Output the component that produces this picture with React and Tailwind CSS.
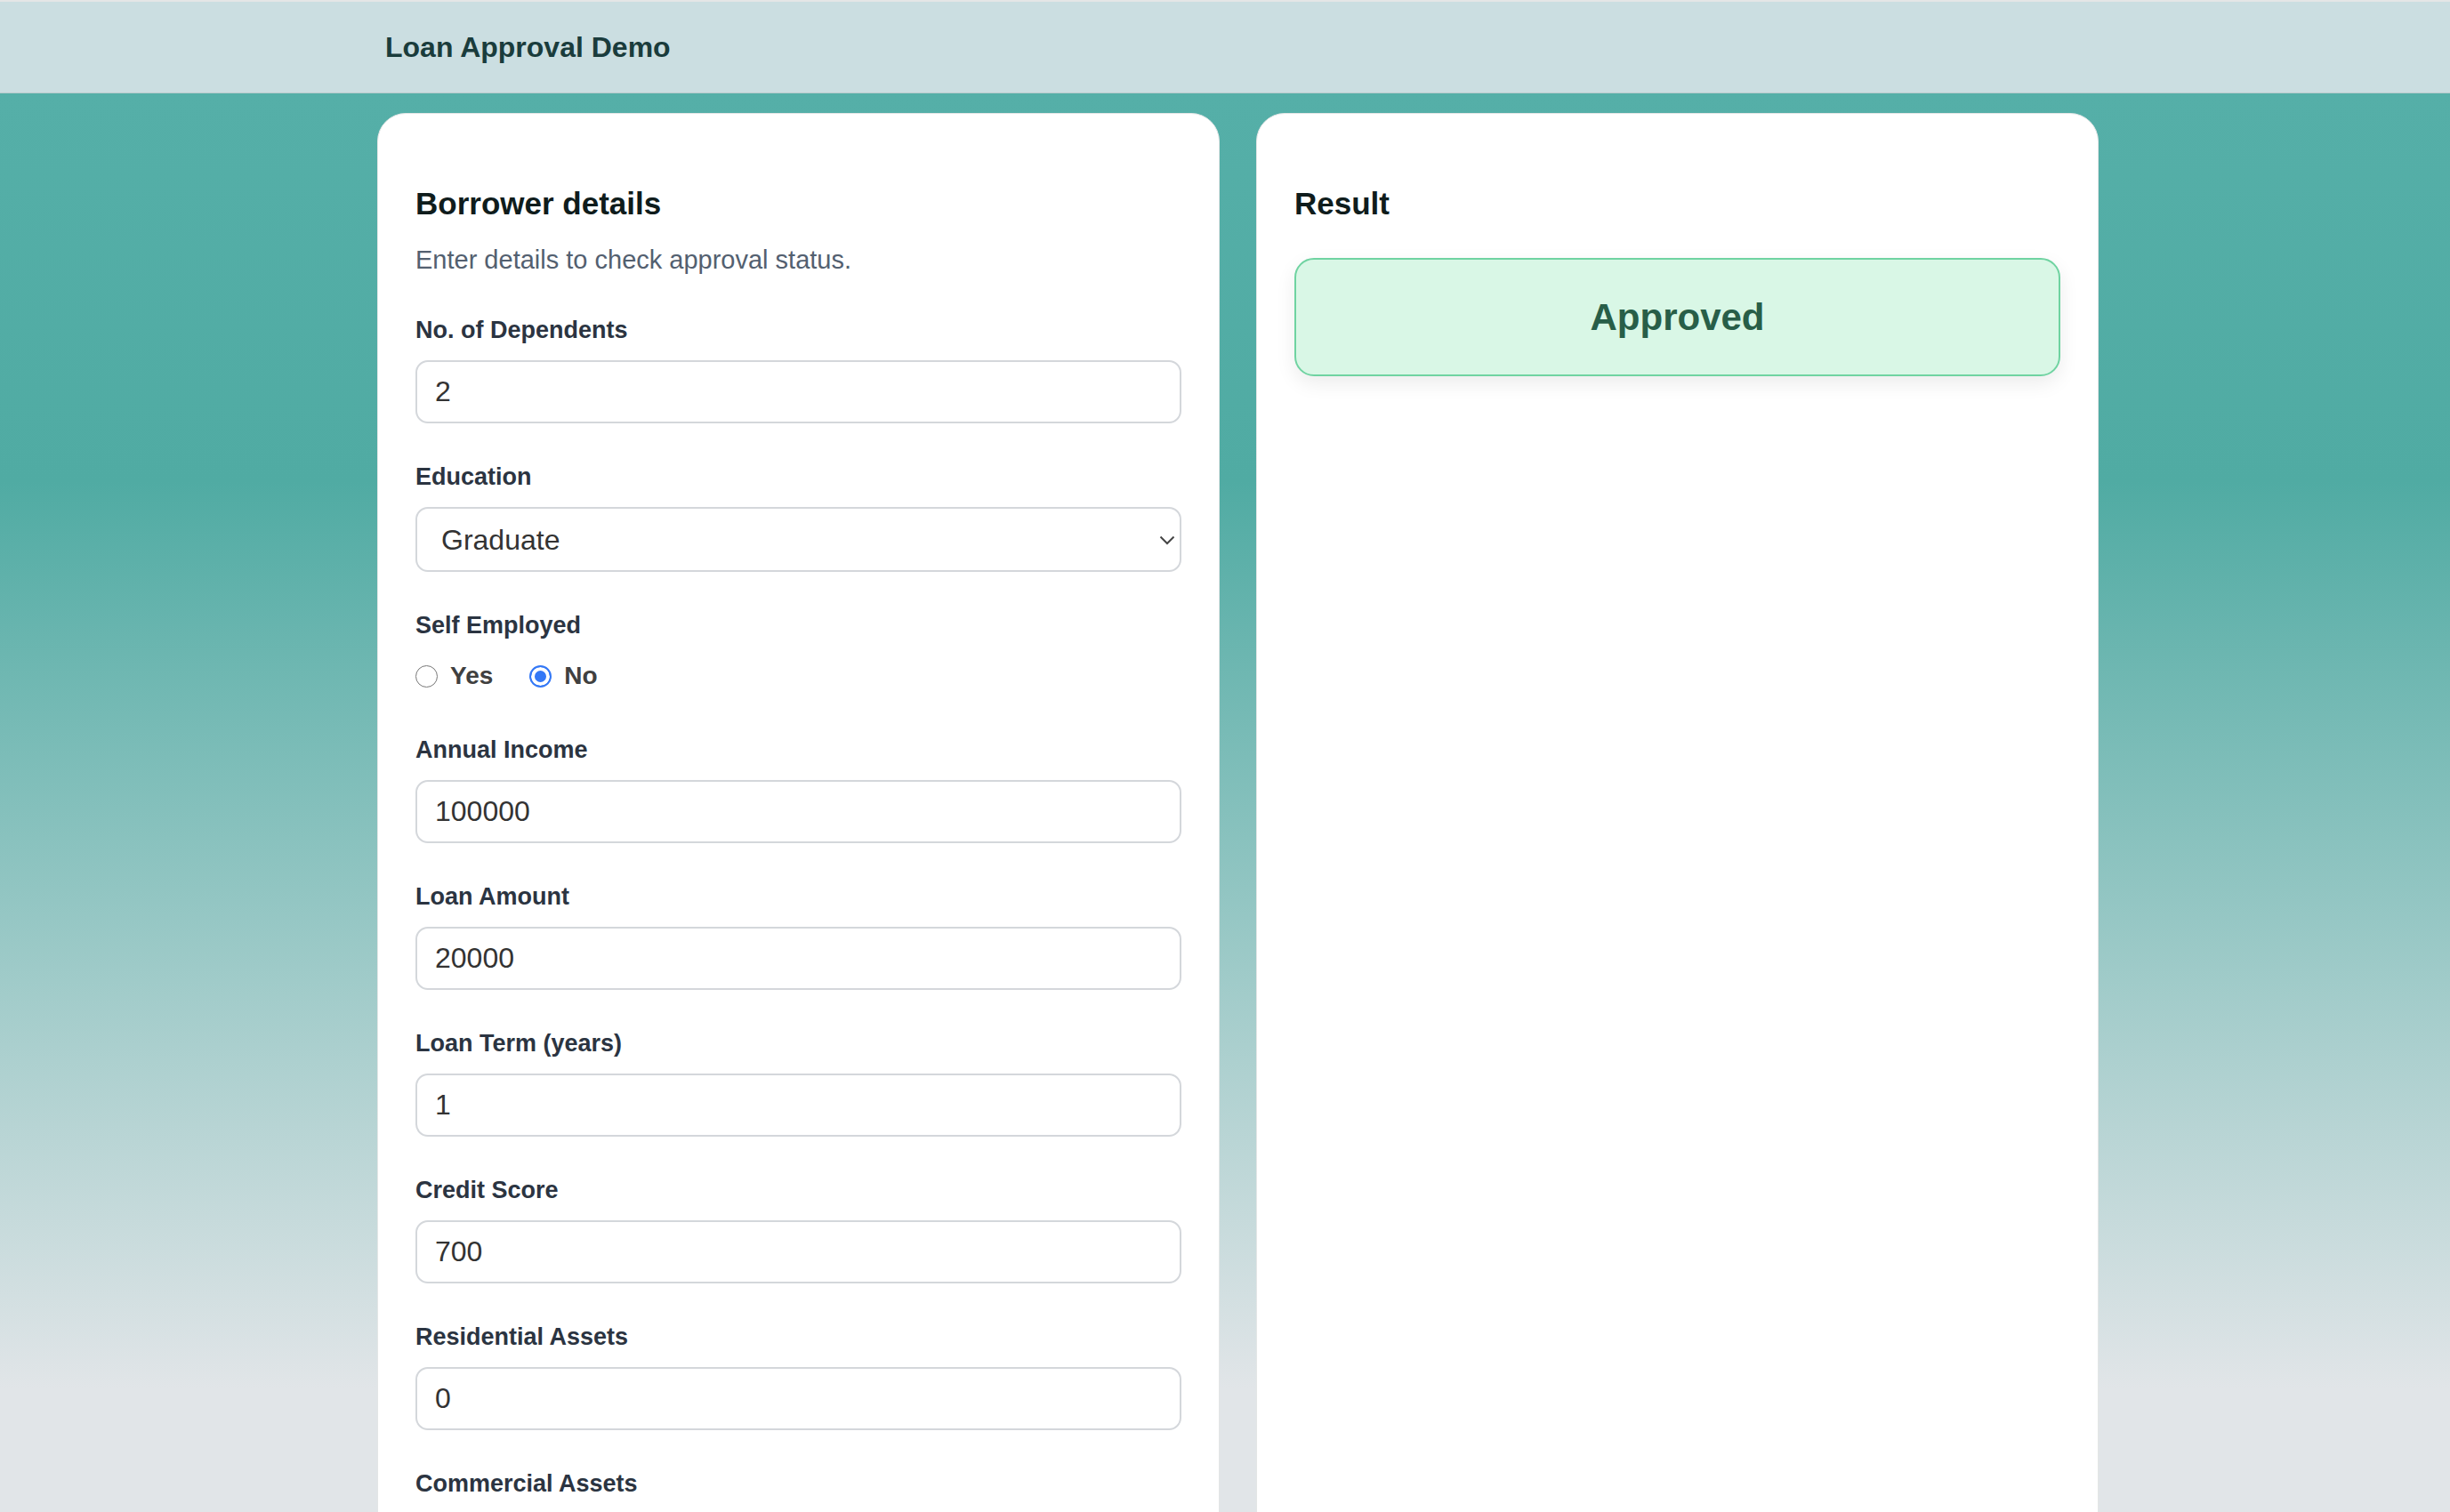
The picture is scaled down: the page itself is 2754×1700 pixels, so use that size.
import { useState } from 'react';

const fields = [
  { id: 'dependents', label: 'No. of Dependents', value: '2' },
  { id: 'education', label: 'Education', type: 'select' },
  { id: 'self', label: 'Self Employed', type: 'radio' },
  { id: 'income', label: 'Annual Income', value: '100000' },
  { id: 'amount', label: 'Loan Amount', value: '20000' },
  { id: 'term', label: 'Loan Term (years)', value: '1' },
  { id: 'cibil', label: 'Credit Score', value: '700' },
  { id: 'res', label: 'Residential Assets', value: '0' },
  { id: 'com', label: 'Commercial Assets', value: '0' },
  { id: 'lux', label: 'Luxury Assets', value: '0' },
  { id: 'bank', label: 'Bank Assets', value: '0' },
];

function Field({ f, selfEmployed, setSelfEmployed }) {
  const label = (
    <label className="block text-[27px] leading-[32px] font-bold text-[#2b3441]">{f.label}</label>
  );

  if (f.type === 'select') {
    return (
      <div>
        {label}
        <div className="relative mt-[18px]">
          <select
            defaultValue="Graduate"
            className="appearance-none w-full h-[73px] rounded-[14px] border-2 border-[#d4d7db] bg-white pl-[27px] pr-10 text-[32px] text-[#333] outline-none"
          >
            <option>Graduate</option>
            <option>Not Graduate</option>
          </select>
          <svg className="absolute right-[7px] top-[32px] pointer-events-none" width="18" height="11" viewBox="0 0 18 11" fill="none">
            <path d="M1.5 1.5L9 9L16.5 1.5" stroke="#454545" strokeWidth="2" />
          </svg>
        </div>
      </div>
    );
  }

  if (f.type === 'radio') {
    return (
      <div>
        {label}
        <div className="mt-[18px] h-[46px] flex items-center gap-[41px] text-[28px] font-bold text-[#404040]">
          {['Yes', 'No'].map(opt => (
            <label key={opt} className="flex items-center gap-[14px]">
              <input
                type="radio"
                name="self"
                checked={selfEmployed === opt}
                onChange={() => setSelfEmployed(opt)}
                className="appearance-none w-[25px] h-[25px] rounded-full border-[1.5px] border-[#777] bg-white checked:border-2 checked:border-[#3478f6] checked:bg-[#3478f6] checked:shadow-[inset_0_0_0_4px_white]"
              />
              {opt}
            </label>
          ))}
        </div>
      </div>
    );
  }

  return (
    <div>
      {label}
      <input
        type="text"
        defaultValue={f.value}
        className="mt-[18px] block w-full h-[71px] rounded-[14px] border-2 border-[#d4d7db] bg-white px-[20px] text-[32px] text-[#333] outline-none"
      />
    </div>
  );
}

export default function App() {
  const [selfEmployed, setSelfEmployed] = useState('No');

  return (
    <div className="min-h-screen font-['Liberation_Sans',Arial,sans-serif]">
      <header className="h-[105px] border-t-2 border-[#e4e6e6] bg-[#cbdee1] border-b border-b-[#b8cacc] flex items-center pl-[433px]">
        <h1 className="text-[32px] font-bold text-[#1a3c3c]">Loan Approval Demo</h1>
      </header>

      <main className="bg-[linear-gradient(180deg,#55afa8_0px,#50aba3_436px,#e1e5e8_1456px,#e1e5e8_100%)] pt-[22px] pb-16">
        <div className="ml-[424px] w-[1935px] grid grid-cols-2 gap-[41px]">
          <section className="bg-white rounded-[32px] border border-[#e3e6e6] px-[42px] pt-[80px] pb-[60px]">
            <h2 className="text-[35px] leading-[42px] font-bold text-[#0f1c1c]">Borrower details</h2>
            <p className="mt-[24px] text-[29px] leading-[36px] text-[#536070]">
              Enter details to check approval status.
            </p>
            <div className="mt-[45px] flex flex-col gap-[44px]">
              {fields.map(f => (
                <Field key={f.id} f={f} selfEmployed={selfEmployed} setSelfEmployed={setSelfEmployed} />
              ))}
            </div>
            <button className="mt-[56px] w-full h-[76px] rounded-[14px] bg-[#2f8f86] text-white text-[30px] font-bold">
              Check approval
            </button>
          </section>

          <section className="bg-white rounded-[32px] border border-[#e3e6e6] px-[42px] pt-[80px]">
            <h2 className="text-[35px] leading-[42px] font-bold text-[#0f1c1c]">Result</h2>
            <div className="mt-[40px] h-[133px] rounded-[22px] border-2 border-[#6fd3a1] bg-[#d9f7e6] shadow-[0_8px_22px_rgba(0,0,0,0.08)] flex items-center justify-center">
              <span className="text-[42px] font-bold text-[#285e48]">Approved</span>
            </div>
          </section>
        </div>
      </main>
    </div>
  );
}
